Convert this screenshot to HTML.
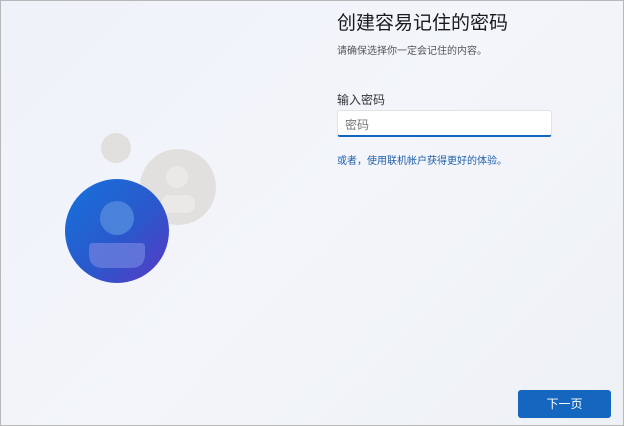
<!DOCTYPE html>
<html><head><meta charset="utf-8"><style>
html,body{margin:0;padding:0}
body{width:624px;height:426px;overflow:hidden;position:relative;font-family:"Liberation Sans","Noto Sans CJK SC",sans-serif;background:linear-gradient(135deg,#eef2f9 0%,#f3f5fa 50%,#eef1f6 100%);}
.frame{position:absolute;inset:0;border:1px solid #b8b8b8;box-sizing:border-box}
.t{position:absolute;white-space:nowrap}
</style></head><body>
<svg width="624" height="426" style="position:absolute;left:0;top:0">
<defs><linearGradient id="g" x1="0" y1="0" x2="1" y2="1"><stop offset="0" stop-color="#1673db"/><stop offset="0.55" stop-color="#2a58cc"/><stop offset="1" stop-color="#5a38c4"/></linearGradient></defs>
<circle cx="116" cy="148" r="15" fill="#e2e0df"/>
<circle cx="178" cy="187" r="38" fill="#e2e0df"/>
<circle cx="177" cy="177" r="11" fill="#ebe9e8"/>
<rect x="161" y="195" width="34" height="18" rx="8" fill="#ebe9e8"/>
<circle cx="117" cy="231" r="52" fill="url(#g)"/>
<circle cx="117" cy="218" r="17" fill="#4f86dc" opacity="0.9"/>
<path d="M93 243 H141 Q145 243 145 247 V254 Q145 268 131 268 H103 Q89 268 89 254 V247 Q89 243 93 243 Z" fill="#6a7ddc" opacity="0.8"/>
</svg>
<div class="t" style="left:337px;top:8px;font-size:19px;color:#1a1a1a">创建容易记住的密码</div>
<div class="t" style="left:337px;top:42px;font-size:10px;color:#555">请确保选择你一定会记住的内容。</div>
<div class="t" style="left:337px;top:91px;font-size:12px;color:#333">输入密码</div>
<div style="position:absolute;left:337px;top:110px;width:215px;height:27px;background:#fff;border:1px solid #e3e3e3;border-bottom:2px solid #1366c0;box-sizing:border-box;border-radius:3px"></div>
<div class="t" style="left:345px;top:116px;font-size:12px;color:#777">密码</div>
<div class="t" style="left:337px;top:152px;font-size:10px;color:#1f5fa8">或者，使用联机帐户获得更好的体验。</div>
<div style="position:absolute;left:518px;top:390px;width:93px;height:28px;background:#1566bf;border-radius:3px;color:#fff;font-size:12px;text-align:center;line-height:28px">下一页</div>
<div class="frame"></div>
</body></html>
